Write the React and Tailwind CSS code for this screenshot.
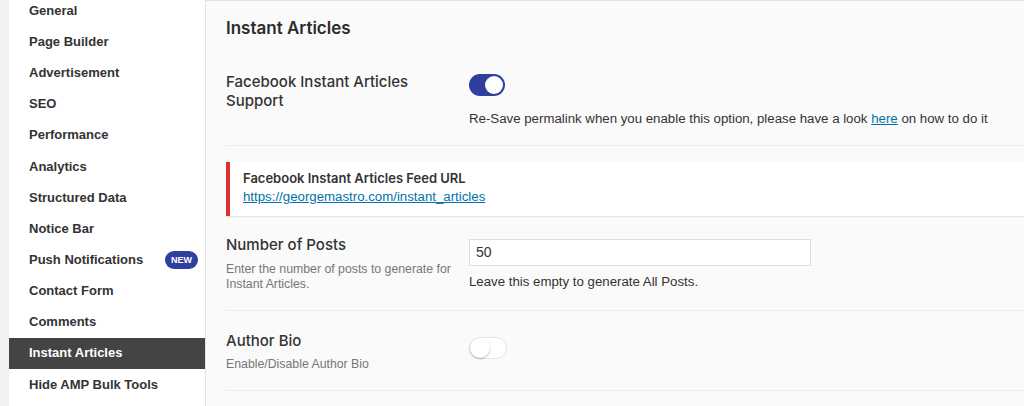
const menu = [
  'General',
  'Page Builder',
  'Advertisement',
  'SEO',
  'Performance',
  'Analytics',
  'Structured Data',
  'Notice Bar',
  'Push Notifications',
  'Contact Form',
  'Comments',
  'Instant Articles',
  'Hide AMP Bulk Tools',
]

const Toggle = ({ on }) =>
  on ? (
    <div className="flex h-[22px] w-[36px] items-center justify-end rounded-full bg-[#2f3f9e] px-[2px]">
      <div className="h-[18px] w-[18px] rounded-full bg-white" />
    </div>
  ) : (
    <div className="flex h-[22px] w-[38px] items-center rounded-full border border-[#e6e6e6] bg-white">
      <div className="h-[20px] w-[20px] rounded-full bg-white shadow-[0_1px_2px_rgba(0,0,0,0.3)]" />
    </div>
  )

const labelFont = { fontFamily: 'Inter, "Liberation Sans", sans-serif' }

const Sidebar = () => (
  <div className="ml-[9px] w-[196px] shrink-0 bg-white">
    <ul className="-mt-[5px]">
      {menu.map((item) => {
        const active = item === 'Instant Articles'
        return (
          <li
            key={item}
            className={`flex h-[31.15px] items-center justify-between pl-[20px] pr-[7px] text-[13px] font-semibold ${
              active ? 'bg-[#444444] text-white' : 'text-[#333]'
            }`}
          >
            <span>{item}</span>
            {item === 'Push Notifications' && (
              <span className="rounded-full bg-[#2f3f9e] px-[6px] py-[2px] text-[9px] font-bold leading-[14px] text-white">
                NEW
              </span>
            )}
          </li>
        )
      })}
    </ul>
  </div>
)

export default function App() {
  return (
    <div
      className="flex h-[406px] w-[1024px] overflow-hidden bg-[#f1f1f1] text-[#333]"
      style={{ fontFamily: '"Liberation Sans", Arial, sans-serif' }}
    >
      <Sidebar />
      <main className="flex-1 border-l border-t border-[#e2e2e2] bg-[#fafafa] pl-[20px]">
        <h1 className="mt-[16px] text-[17px] font-semibold leading-[22px] text-[#2c2c2c]" style={labelFont}>
          Instant Articles
        </h1>

        <div className="mt-[33px] flex border-b border-[#ececec] pb-[17px]">
          <div className="w-[243px] shrink-0 text-[15px] font-medium leading-[19px] text-[#333]" style={labelFont}>
            Facebook Instant Articles
            <br />
            Support
          </div>
          <div className="pt-[2px]">
            <Toggle on />
            <p className="mt-[14px] text-[13.25px] leading-[18px] text-[#333]">
              Re-Save permalink when you enable this option, please have a look{' '}
              <a className="text-[#0073aa] underline">here</a> on how to do it
            </p>
          </div>
        </div>

        <div className="mt-[16px] border-l-4 border-[#dc3232] bg-white pt-[7px] pb-[9px] pl-[13px] shadow-[0_1px_1px_rgba(0,0,0,0.08)]">
          <div className="text-[13px] font-semibold leading-[18px] text-[#333]" style={labelFont}>
            Facebook Instant Articles Feed URL
          </div>
          <a className="block text-[13.25px] leading-[20px] text-[#0073aa] underline">
            https://georgemastro.com/instant_articles
          </a>
        </div>

        <div className="mt-[19px] flex border-b border-[#ececec] pb-[18px]">
          <div className="w-[243px] shrink-0">
            <div className="text-[15px] font-medium leading-[20px] text-[#333]" style={labelFont}>
              Number of Posts
            </div>
            <p className="mt-[7px] w-[235px] text-[12.3px] leading-[15px] text-[#777]">
              Enter the number of posts to generate for Instant Articles.
            </p>
          </div>
          <div className="pt-[4px]">
            <div className="flex h-[27px] w-[342px] items-center border border-[#dedede] bg-white px-[6px] text-[14px] text-[#333]">
              50
            </div>
            <p className="mt-[8px] text-[13.25px] leading-[16px] text-[#333]">Leave this empty to generate All Posts.</p>
          </div>
        </div>

        <div className="flex border-b border-[#ececec] pt-[20px] pb-[18px]">
          <div className="w-[243px] shrink-0">
            <div className="text-[15px] font-medium leading-[20px] text-[#333]" style={labelFont}>
              Author Bio
            </div>
            <p className="mt-[6px] text-[12.3px] leading-[15px] text-[#777]">Enable/Disable Author Bio</p>
          </div>
          <div className="pt-[6px]">
            <Toggle on={false} />
          </div>
        </div>
      </main>
    </div>
  )
}
